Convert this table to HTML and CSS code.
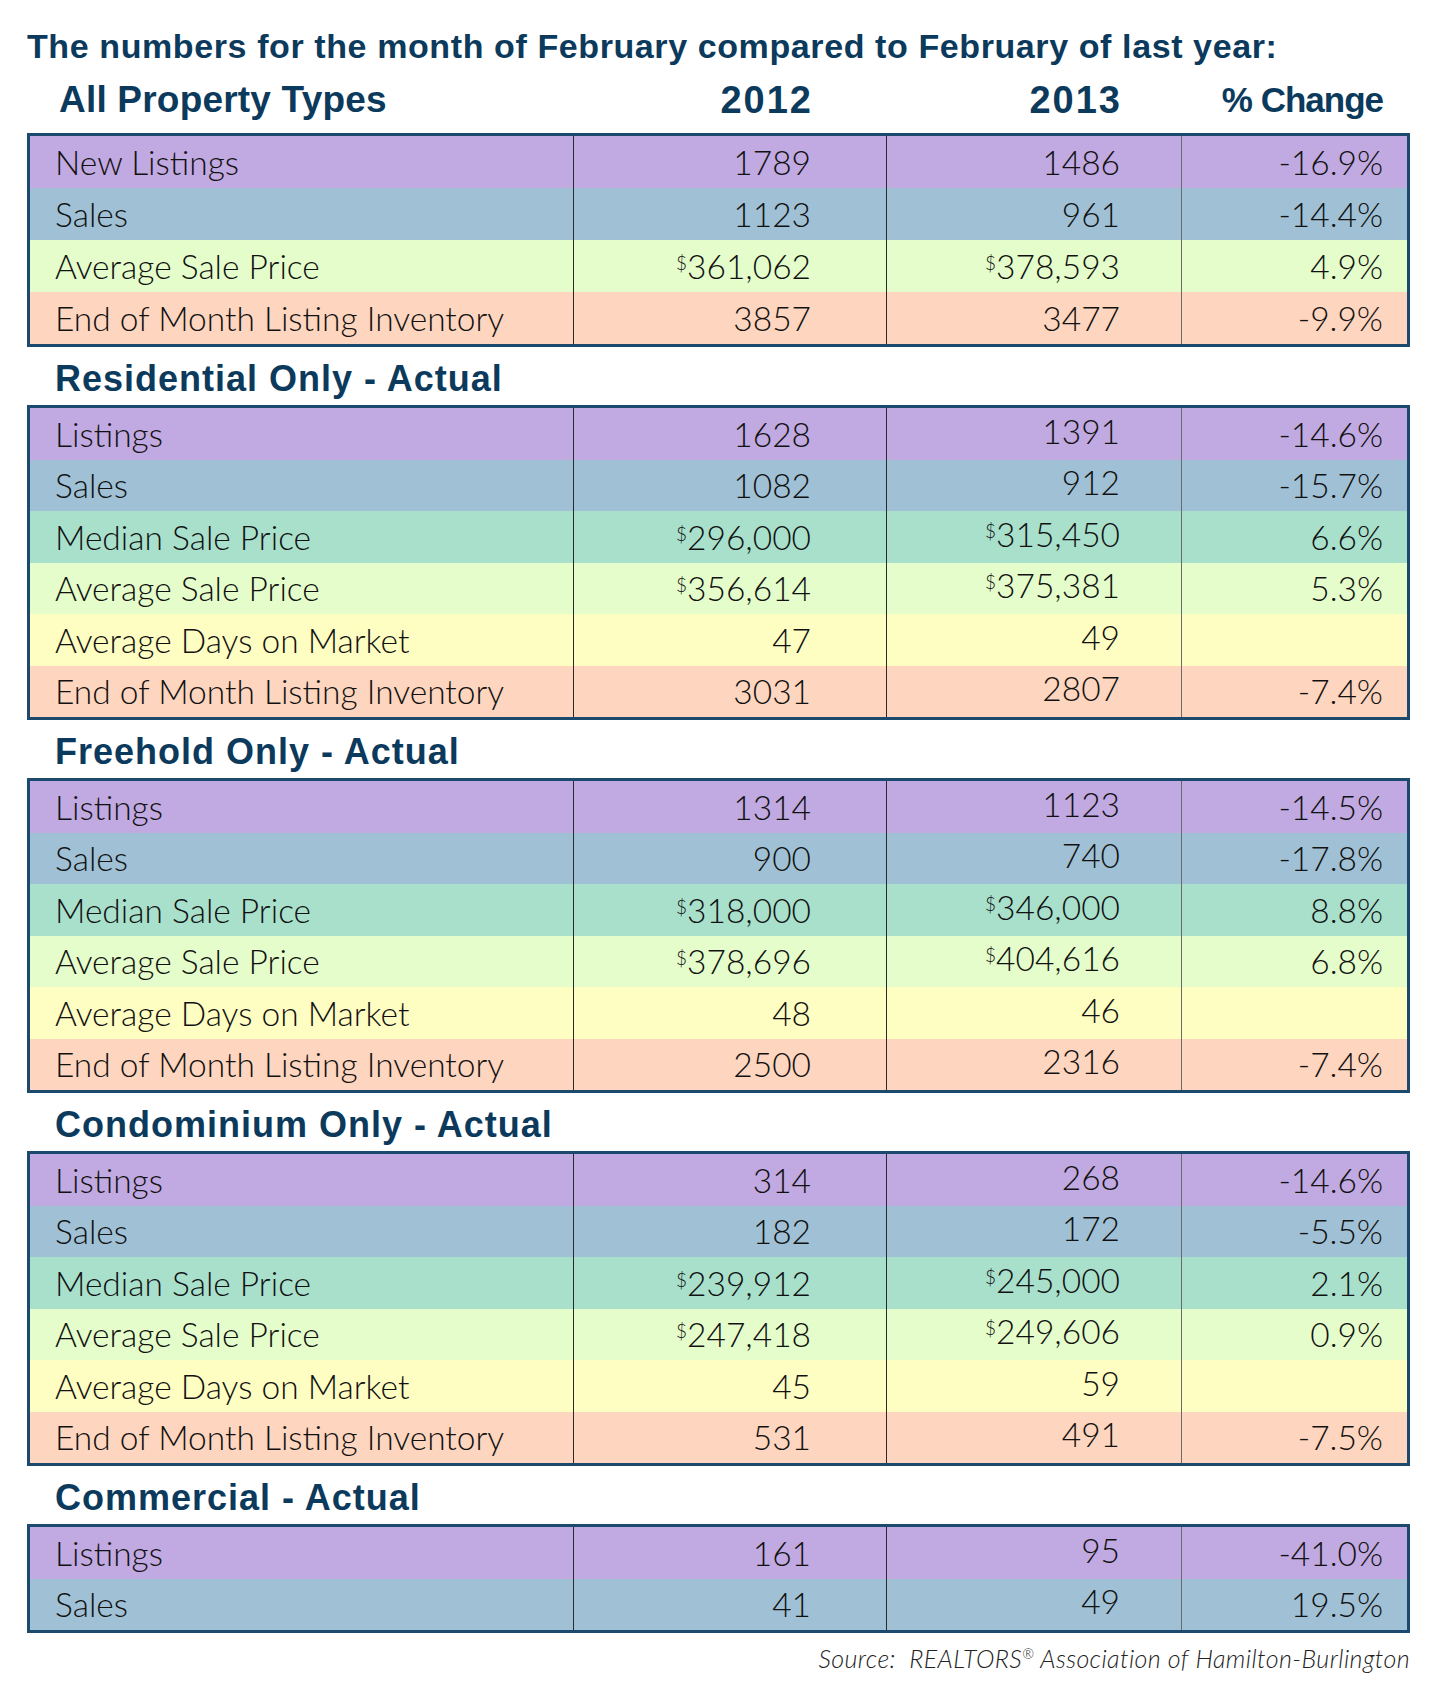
FILE: index.html
```html
<!DOCTYPE html>
<html lang="en">
  <head>
    <meta charset="UTF-8" />
    <title>February Market Numbers</title>
    <link rel="stylesheet" href="styles.css">
  </head>
  <body>
    <div class="page">
      <h1 class="title">The numbers for the month of February compared to February of last year:</h1>

      <div class="head-row">
        <div class="head-label">All Property Types</div>
        <div class="head-year c2">2012</div>
        <div class="head-year c3">2013</div>
        <div class="head-year c4">% Change</div>
      </div>

      <table class="stats first">
        <colgroup><col class="w1"><col class="w2"><col class="w3"><col class="w4"></colgroup>
        <tr class="purple"><td>New Listings</td><td>1789</td><td>1486</td><td>-16.9%</td></tr>
        <tr class="blue"><td>Sales</td><td>1123</td><td>961</td><td>-14.4%</td></tr>
        <tr class="lime"><td>Average Sale Price</td><td><sup>$</sup>361,062</td><td><sup>$</sup>378,593</td><td>4.9%</td></tr>
        <tr class="peach"><td>End of Month Listing Inventory</td><td>3857</td><td>3477</td><td>-9.9%</td></tr>
      </table>

      <h2 class="section">Residential Only - Actual</h2>
      <table class="stats">
        <colgroup><col class="w1"><col class="w2"><col class="w3"><col class="w4"></colgroup>
        <tr class="purple"><td>Listings</td><td>1628</td><td>1391</td><td>-14.6%</td></tr>
        <tr class="blue"><td>Sales</td><td>1082</td><td>912</td><td>-15.7%</td></tr>
        <tr class="mint"><td>Median Sale Price</td><td><sup>$</sup>296,000</td><td><sup>$</sup>315,450</td><td>6.6%</td></tr>
        <tr class="lime"><td>Average Sale Price</td><td><sup>$</sup>356,614</td><td><sup>$</sup>375,381</td><td>5.3%</td></tr>
        <tr class="yellow"><td>Average Days on Market</td><td>47</td><td>49</td><td></td></tr>
        <tr class="peach"><td>End of Month Listing Inventory</td><td>3031</td><td>2807</td><td>-7.4%</td></tr>
      </table>

      <h2 class="section">Freehold Only - Actual</h2>
      <table class="stats">
        <colgroup><col class="w1"><col class="w2"><col class="w3"><col class="w4"></colgroup>
        <tr class="purple"><td>Listings</td><td>1314</td><td>1123</td><td>-14.5%</td></tr>
        <tr class="blue"><td>Sales</td><td>900</td><td>740</td><td>-17.8%</td></tr>
        <tr class="mint"><td>Median Sale Price</td><td><sup>$</sup>318,000</td><td><sup>$</sup>346,000</td><td>8.8%</td></tr>
        <tr class="lime"><td>Average Sale Price</td><td><sup>$</sup>378,696</td><td><sup>$</sup>404,616</td><td>6.8%</td></tr>
        <tr class="yellow"><td>Average Days on Market</td><td>48</td><td>46</td><td></td></tr>
        <tr class="peach"><td>End of Month Listing Inventory</td><td>2500</td><td>2316</td><td>-7.4%</td></tr>
      </table>

      <h2 class="section">Condominium Only - Actual</h2>
      <table class="stats">
        <colgroup><col class="w1"><col class="w2"><col class="w3"><col class="w4"></colgroup>
        <tr class="purple"><td>Listings</td><td>314</td><td>268</td><td>-14.6%</td></tr>
        <tr class="blue"><td>Sales</td><td>182</td><td>172</td><td>-5.5%</td></tr>
        <tr class="mint"><td>Median Sale Price</td><td><sup>$</sup>239,912</td><td><sup>$</sup>245,000</td><td>2.1%</td></tr>
        <tr class="lime"><td>Average Sale Price</td><td><sup>$</sup>247,418</td><td><sup>$</sup>249,606</td><td>0.9%</td></tr>
        <tr class="yellow"><td>Average Days on Market</td><td>45</td><td>59</td><td></td></tr>
        <tr class="peach"><td>End of Month Listing Inventory</td><td>531</td><td>491</td><td>-7.5%</td></tr>
      </table>

      <h2 class="section">Commercial - Actual</h2>
      <table class="stats">
        <colgroup><col class="w1"><col class="w2"><col class="w3"><col class="w4"></colgroup>
        <tr class="purple"><td>Listings</td><td>161</td><td>95</td><td>-41.0%</td></tr>
        <tr class="blue"><td>Sales</td><td>41</td><td>49</td><td>19.5%</td></tr>
      </table>

      <p class="source">Source:&nbsp; REALTORS<sup>®</sup> Association of Hamilton-Burlington</p>
    </div>
  </body>
</html>
```

FILE: styles.css
```css
body {
  margin: 0;
  background: #fff;
  font-family: Lato, "Liberation Sans", sans-serif;
  color: #111;
}
.page {
  width: 1383px;
  padding: 0 23px 10px 27px;
}

/* headings */
.title {
  margin: 0;
  padding-top: 26px;
  font: bold 34px/40px "Liberation Sans", Arial, sans-serif;
  letter-spacing: 0.6px;
  color: #0c3a5c;
  white-space: nowrap;
}
.head-row {
  display: grid;
  grid-template-columns: 546px 313px 295px 229px;
  margin: 14px 0 13px;
  font-family: "Liberation Sans", Arial, sans-serif;
  font-weight: bold;
  color: #0c3a5c;
  line-height: 40px;
}
.head-label {
  padding-left: 32px;
  font-size: 37px;
  letter-spacing: 0.2px;
}
.head-year {
  text-align: right;
  font-size: 38px;
  letter-spacing: 2px;
}
.head-year.c2 { padding-right: 73px; }
.head-year.c3 { padding-right: 59px; }
.head-year.c4 {
  padding-right: 27px;
  font-size: 35px;
  letter-spacing: -1px;
}

.section {
  margin: 14px 0 9px;
  padding-left: 28px;
  font: bold 36px/35px "Liberation Sans", Arial, sans-serif;
  letter-spacing: 1px;
  color: #0c3a5c;
}

/* tables */
.stats {
  width: 1383px;
  table-layout: fixed;
  border-collapse: separate;
  border-spacing: 0;
  border: 3px solid #1b4a6e;
}
.w1 { width: 543px; }
.w2 { width: 313px; }
.w3 { width: 295px; }
.w4 { width: 226px; }
.stats td {
  height: 45.5px;
  padding: 3px 0;
  font-size: 33.5px;
  font-weight: 300;
  line-height: 40px;
  text-align: right;
  vertical-align: middle;
  white-space: nowrap;
}
.stats.first td { height: 46px; }
.stats td:nth-child(1) {
  text-align: left;
  padding-left: 25px;
}
.stats td:nth-child(2) {
  border-left: 1px solid #2a2a2a;
  padding-right: 75px;
}
.stats td:nth-child(3) {
  border-left: 1px solid #2a2a2a;
  padding-right: 61px;
}
.stats:not(.first) td:nth-child(3) {
  padding-top: 0;
  padding-bottom: 6px;
}
.stats td:nth-child(4) {
  border-left: 1px solid #6a6a6a;
  padding-right: 24px;
}
.stats sup {
  font-size: 19px;
  line-height: 0;
  vertical-align: 9px;
}

.purple td { background: #c1a9e1; }
.blue td { background: #a0c1d5; }
.mint td { background: #a8e0cc; }
.lime td { background: #e4fdca; }
.yellow td { background: #fefdc2; }
.peach td { background: #fed5be; }

.source {
  margin: 10px 0 0;
  text-align: right;
  font-size: 25px;
  line-height: 30px;
  font-style: italic;
  font-weight: 300;
  letter-spacing: 0.4px;
  color: #222;
}
.source sup {
  font-size: 14px;
  line-height: 0;
}
```
